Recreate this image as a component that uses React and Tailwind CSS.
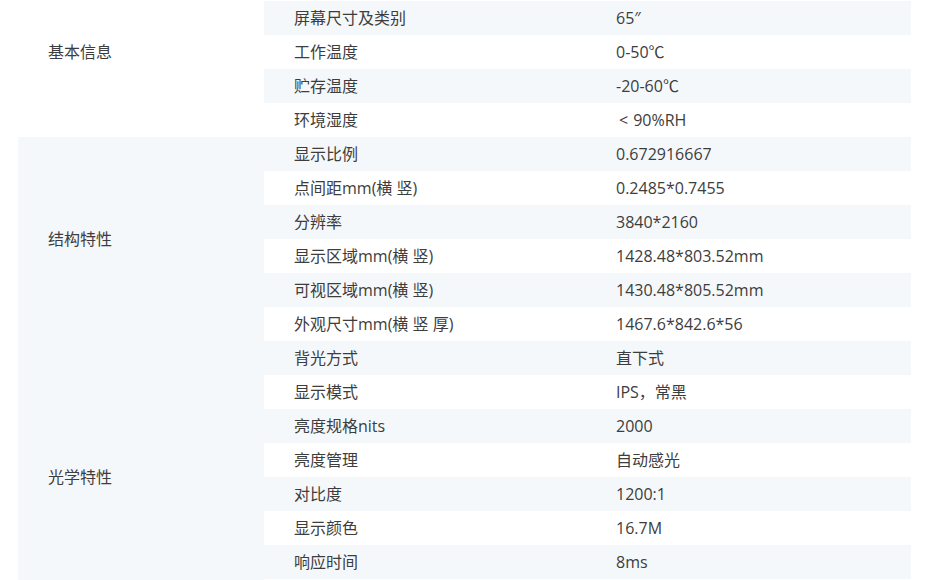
const groups = [
  {
    name: "基本信息",
    shaded: false,
    rows: [
      ["", ""],
      ["屏幕尺寸及类别", "65″"],
      ["工作温度", "0-50℃"],
      ["贮存温度", "-20-60℃"],
      [
        "环境湿度",
        <>
          <span className="ml-[3px] mr-[5px]">&lt;</span>90%RH
        </>,
      ],
    ],
  },
  {
    name: "结构特性",
    shaded: true,
    rows: [
      ["显示比例", "0.672916667"],
      ["点间距mm(横 竖)", "0.2485*0.7455"],
      ["分辨率", "3840*2160"],
      ["显示区域mm(横 竖)", "1428.48*803.52mm"],
      ["可视区域mm(横 竖)", "1430.48*805.52mm"],
      ["外观尺寸mm(横 竖 厚)", "1467.6*842.6*56"],
    ],
  },
  {
    name: "光学特性",
    shaded: true,
    rows: [
      ["背光方式", "直下式"],
      ["显示模式", "IPS，常黑"],
      ["亮度规格nits", "2000"],
      ["亮度管理", "自动感光"],
      ["对比度", "1200:1"],
      ["显示颜色", "16.7M"],
      ["响应时间", "8ms"],
      ["", ""],
    ],
  },
];

function SpecGroup({ group, startIndex }) {
  return (
    <div className="flex">
      <div
        className={`w-[246px] shrink-0 flex items-center pl-[30px] ${
          group.shaded ? "bg-[#f4f8fb]" : "bg-white"
        }`}
      >
        {group.name}
      </div>
      <div className="flex-1">
        {group.rows.map(([label, value], i) => (
          <div
            key={i}
            className={`flex h-[34px] items-center ${
              (startIndex + i) % 2 === 1 ? "bg-[#f4f8fb]" : "bg-white"
            }`}
          >
            <div className="w-[352px] pl-[30px]">{label}</div>
            <div>{value}</div>
          </div>
        ))}
      </div>
    </div>
  );
}

export default function App() {
  let idx = 0;
  return (
    <div className="h-[580px] overflow-hidden bg-white">
      <div
        className="ml-[18px] w-[893px] -mt-[33px] text-[16px] text-[#3d3d3d]"
        style={{ fontFamily: '"Open Sans", "Noto Sans CJK SC", sans-serif' }}
      >
        {groups.map((g) => {
          const start = idx;
          idx += g.rows.length;
          return <SpecGroup key={g.name} group={g} startIndex={start} />;
        })}
      </div>
    </div>
  );
}
